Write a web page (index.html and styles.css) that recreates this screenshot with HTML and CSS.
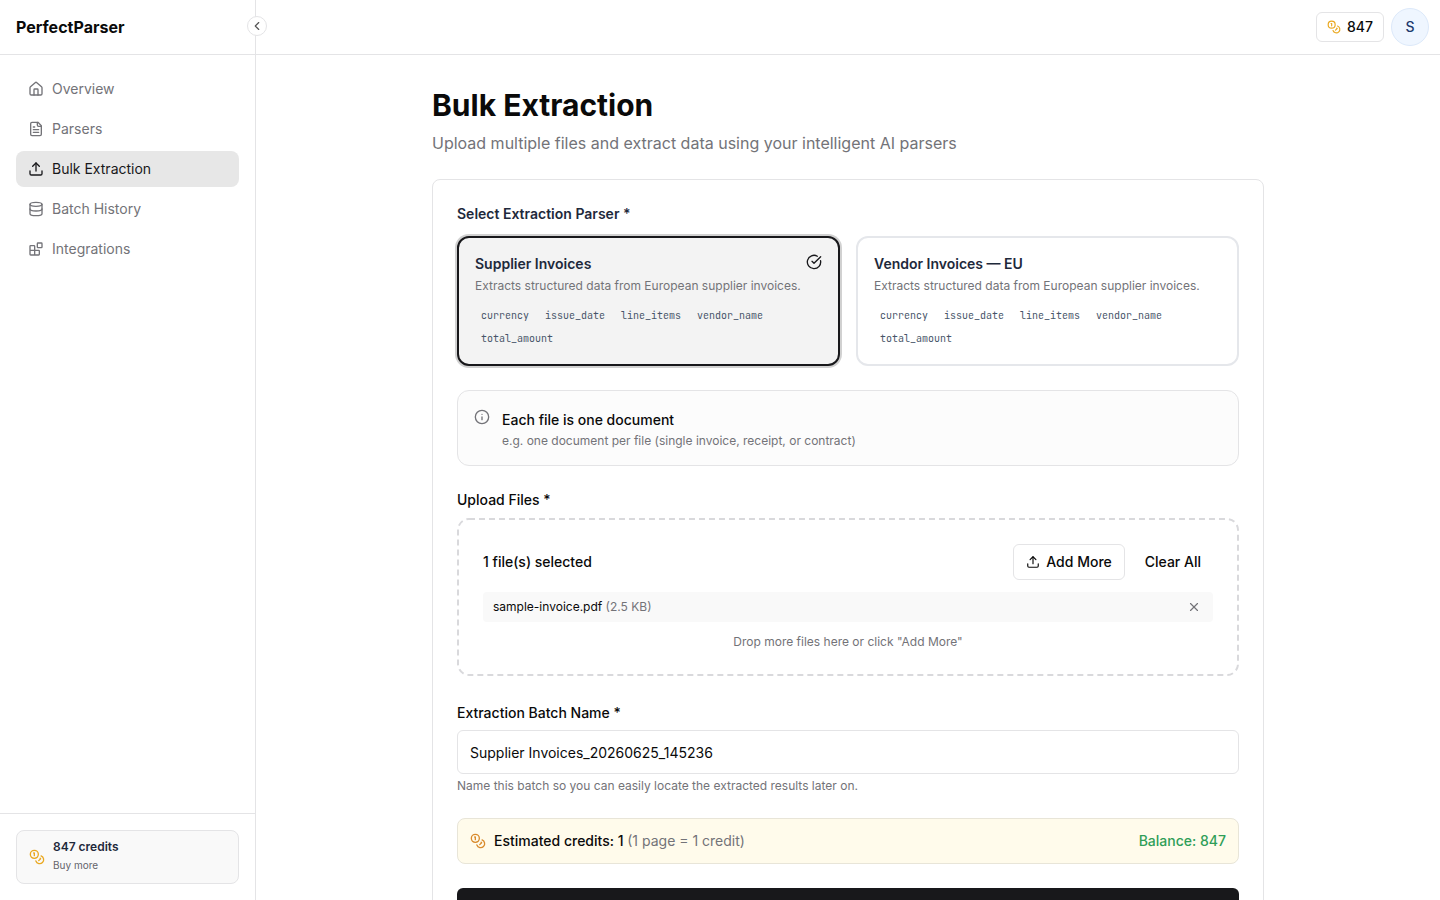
FILE: index.html
```html
<!DOCTYPE html>
<html lang="en">
<head>
<meta charset="utf-8">
<title>Bulk Extraction - PerfectParser</title>
<link rel="stylesheet" href="styles.css">
</head>
<body>
<svg class="sprite" aria-hidden="true">
  <symbol id="coins" viewBox="0 0 24 24"><circle cx="8" cy="8" r="6"/><path d="M18.09 10.37A6 6 0 1 1 10.34 18"/><path d="M7 6h1v4"/><path d="m16.71 13.88.7.71-2.82 2.82"/></symbol>
  <symbol id="upload" viewBox="0 0 24 24"><path d="M12 3v12"/><path d="m17 8-5-5-5 5"/><path d="M21 15v4a2 2 0 0 1-2 2H5a2 2 0 0 1-2-2v-4"/></symbol>
</svg>
<div class="app">
  <aside class="sidebar">
    <div class="brand">PerfectParser</div>
    <button class="collapse" aria-label="Collapse sidebar"><svg class="icon" viewBox="0 0 24 24"><path d="m15 18-6-6 6-6"/></svg></button>
    <nav class="nav">
      <a class="nav-item"><svg class="icon" viewBox="0 0 24 24"><path d="M15 21v-8a1 1 0 0 0-1-1h-4a1 1 0 0 0-1 1v8"/><path d="M3 10a2 2 0 0 1 .709-1.528l7-5.999a2 2 0 0 1 2.582 0l7 5.999A2 2 0 0 1 21 10v9a2 2 0 0 1-2 2H5a2 2 0 0 1-2-2z"/></svg>Overview</a>
      <a class="nav-item"><svg class="icon" viewBox="0 0 24 24"><path d="M15 2H6a2 2 0 0 0-2 2v16a2 2 0 0 0 2 2h12a2 2 0 0 0 2-2V7Z"/><path d="M14 2v4a2 2 0 0 0 2 2h4"/><path d="M10 9H8"/><path d="M16 13H8"/><path d="M16 17H8"/></svg>Parsers</a>
      <a class="nav-item active"><svg class="icon"><use href="#upload"/></svg>Bulk Extraction</a>
      <a class="nav-item"><svg class="icon" viewBox="0 0 24 24"><ellipse cx="12" cy="5" rx="9" ry="3"/><path d="M3 5v14a9 3 0 0 0 18 0V5"/><path d="M3 12a9 3 0 0 0 18 0"/></svg>Batch History</a>
      <a class="nav-item"><svg class="icon" viewBox="0 0 24 24"><rect width="7" height="7" x="14" y="3" rx="1"/><path d="M10 21V8a1 1 0 0 0-1-1H4a1 1 0 0 0-1 1v12a1 1 0 0 0 1 1h12a1 1 0 0 0 1-1v-5a1 1 0 0 0-1-1H3"/></svg>Integrations</a>
    </nav>
    <div class="sidebar-footer">
      <div class="credits-card">
        <svg class="icon coin"><use href="#coins"/></svg>
        <div class="credits-text"><div class="credits-count">847 credits</div><div class="credits-buy">Buy more</div></div>
      </div>
    </div>
  </aside>
  <div class="content">
    <header class="topbar">
      <div class="balance-chip"><svg class="icon coin small"><use href="#coins"/></svg>847</div>
      <div class="avatar">S</div>
    </header>
    <main class="page">
      <h1 class="title">Bulk Extraction</h1>
      <p class="subtitle">Upload multiple files and extract data using your intelligent AI parsers</p>
      <section class="panel">
        <div class="label slate">Select Extraction Parser *</div>
        <div class="parsers">
          <article class="parser selected">
            <div class="parser-name">Supplier Invoices</div>
            <p class="parser-desc">Extracts structured data from European supplier invoices.</p>
            <div class="tags"><span class="tag">currency</span><span class="tag">issue_date</span><span class="tag">line_items</span><span class="tag">vendor_name</span><span class="tag">total_amount</span></div>
            <svg class="icon check" viewBox="0 0 24 24"><path d="M21.801 10A10 10 0 1 1 17 3.335"/><path d="m9 11 3 3L22 4"/></svg>
          </article>
          <article class="parser">
            <div class="parser-name">Vendor Invoices — EU</div>
            <p class="parser-desc">Extracts structured data from European supplier invoices.</p>
            <div class="tags"><span class="tag">currency</span><span class="tag">issue_date</span><span class="tag">line_items</span><span class="tag">vendor_name</span><span class="tag">total_amount</span></div>
          </article>
        </div>
        <div class="info">
          <svg class="icon" viewBox="0 0 24 24"><circle cx="12" cy="12" r="10"/><path d="M12 16v-4"/><path d="M12 8h.01"/></svg>
          <div><div class="info-title">Each file is one document</div><div class="hint">e.g. one document per file (single invoice, receipt, or contract)</div></div>
        </div>
        <div class="label">Upload Files *</div>
        <div class="dropzone">
          <svg class="dash" width="782" height="158"><rect x="1" y="1" width="780" height="156" rx="11"/></svg>
          <div class="drop-head">
            <span class="drop-count">1 file(s) selected</span>
            <button class="btn outline"><svg class="icon small"><use href="#upload"/></svg>Add More</button>
            <button class="btn">Clear All</button>
          </div>
          <div class="file"><span>sample-invoice.pdf <span class="muted">(2.5 KB)</span></span><svg class="icon small muted" viewBox="0 0 24 24"><path d="M18 6 6 18"/><path d="m6 6 12 12"/></svg></div>
          <p class="hint center">Drop more files here or click "Add More"</p>
        </div>
        <div class="label batch-label">Extraction Batch Name *</div>
        <input class="input" value="Supplier Invoices_20260625_145236">
        <p class="hint">Name this batch so you can easily locate the extracted results later on.</p>
        <div class="estimate">
          <svg class="icon"><use href="#coins"/></svg>
          <span>Estimated credits: 1 <span class="note">(1 page = 1 credit)</span></span>
          <span class="balance">Balance: 847</span>
        </div>
        <button class="submit" aria-label="Start extraction"></button>
      </section>
    </main>
  </div>
</div>
</body>
</html>
```
FILE: styles.css
```css
* { box-sizing: border-box; }
body {
  margin: 0;
  font: 14px/20px Inter, "Liberation Sans", sans-serif;
  color: #0a0a0a;
  background: #fff;
}
h1, p { margin: 0; }
button, input { font: inherit; color: inherit; }
.sprite { display: none; }
.icon {
  display: block;
  flex: none;
  width: 16px;
  height: 16px;
  fill: none;
  stroke: currentColor;
  stroke-width: 2;
  stroke-linecap: round;
  stroke-linejoin: round;
}
.icon.small { width: 14px; height: 14px; }
.coin { color: #eaa81f; }
.muted { color: #737378; }
.app { display: flex; height: 900px; overflow: hidden; }

.sidebar {
  position: relative;
  display: flex;
  flex-direction: column;
  flex: none;
  width: 256px;
  border-right: 1px solid #e4e4e6;
}
.brand {
  height: 55px;
  padding-left: 16px;
  border-bottom: 1px solid #e4e4e6;
  font-size: 16px;
  font-weight: 700;
  line-height: 54px;
}
.collapse {
  position: absolute;
  top: 16px;
  right: -12px;
  z-index: 1;
  display: grid;
  place-items: center;
  width: 20px;
  height: 20px;
  padding: 0;
  border: 1px solid #e4e4e6;
  border-radius: 50%;
  background: #fff;
  color: #555;
}
.collapse .icon { width: 14px; height: 14px; }
.nav { display: flex; flex: 1; flex-direction: column; gap: 4px; padding: 16px; }
.nav-item {
  display: flex;
  align-items: center;
  gap: 8px;
  height: 36px;
  padding-left: 12px;
  border-radius: 8px;
  color: #737378;
}
.nav-item.active { background: #e7e7e7; color: #18181b; }
.sidebar-footer { height: 87px; padding: 16px; border-top: 1px solid #e4e4e6; }
.credits-card {
  display: flex;
  align-items: center;
  gap: 8px;
  height: 54px;
  padding-left: 12px;
  border: 1px solid #e4e4e6;
  border-radius: 8px;
  background: #f9f9f9;
}
.credits-text { padding-bottom: 4px; }
.credits-count { font-size: 12px; font-weight: 600; color: #1e293b; }
.credits-buy { font-size: 10px; line-height: 16px; color: #64646b; }

.content { flex: 1; }
.topbar {
  display: flex;
  align-items: center;
  justify-content: flex-end;
  gap: 7px;
  height: 55px;
  padding-right: 11px;
  border-bottom: 1px solid #e4e4e6;
}
.balance-chip {
  display: flex;
  align-items: center;
  gap: 6px;
  height: 30px;
  padding: 0 10px;
  border: 1px solid #e4e4e6;
  border-radius: 6px;
  font-weight: 500;
}
.avatar {
  width: 38px;
  height: 38px;
  border: 1px solid #dce9fa;
  border-radius: 50%;
  background: #eff6ff;
  color: #1e3a6e;
  font-weight: 500;
  line-height: 36px;
  text-align: center;
}
.page { width: 832px; margin: 0 auto; padding-top: 32px; }
.title { font-size: 30px; font-weight: 700; line-height: 36px; }
.subtitle { margin-top: 8px; font-size: 16px; line-height: 24px; color: #737378; }
.panel {
  height: 900px;
  margin-top: 24px;
  padding: 24px;
  border: 1px solid #e4e4e6;
  border-radius: 8px;
}
.label { margin-bottom: 8px; font-weight: 500; }
.label.slate { margin-bottom: 12px; font-weight: 600; color: #1e293b; }
.parsers { display: grid; grid-template-columns: 1fr 1fr; gap: 16px; }
.parser {
  position: relative;
  height: 130px;
  padding: 16px;
  border: 2px solid #e5e7eb;
  border-radius: 12px;
}
.parser.selected {
  border-color: #18181b;
  background: #f3f3f3;
  box-shadow: 0 0 0 2px #d1d1d1;
}
.parser-name { font-weight: 600; color: #1e293b; }
.parser-desc { margin-top: 2px; font-size: 12px; color: #737378; }
.tags { display: flex; flex-wrap: wrap; gap: 4px; margin-top: 10px; }
.tag {
  height: 19px;
  padding: 0 6px;
  font: 10px/19px "JetBrains Mono", "DejaVu Sans Mono", monospace;
  color: #475569;
}
.check { position: absolute; top: 16px; right: 16px; color: #18181b; }
.info {
  display: flex;
  gap: 12px;
  height: 76px;
  margin: 24px 0;
  padding: 18px 16px;
  border: 1px solid #e4e4e6;
  border-radius: 12px;
  background: #fcfcfc;
}
.info > .icon { color: #737378; }
.info-title { margin: 1px 0 3px; font-weight: 500; }
.hint { font-size: 12px; line-height: 16px; color: #737378; }
.dropzone { position: relative; height: 158px; padding: 26px; }
.dash { position: absolute; inset: 0; fill: none; stroke: #d9d9dc; stroke-width: 2; stroke-dasharray: 6 4; pointer-events: none; }
.drop-head { display: flex; align-items: center; }
.drop-count { flex: 1; font-weight: 500; }
.btn {
  display: flex;
  align-items: center;
  gap: 6px;
  height: 36px;
  padding: 0 12px;
  border: 0;
  background: none;
  font-weight: 500;
}
.btn.outline { margin-right: 8px; border: 1px solid #e4e4e6; border-radius: 6px; }
.file {
  display: flex;
  align-items: center;
  justify-content: space-between;
  height: 30px;
  margin: 12px 0;
  padding: 0 12px 0 10px;
  border-radius: 4px;
  background: #f9f9f9;
  font-size: 12px;
}
.center { text-align: center; }
.batch-label { margin: 27px 0 7px; }
.input {
  display: block;
  width: 100%;
  height: 44px;
  margin-bottom: 4px;
  padding: 0 12px;
  border: 1px solid #e4e4e6;
  border-radius: 6px;
  background: #fff;
}
.estimate {
  display: flex;
  align-items: center;
  gap: 8px;
  height: 46px;
  margin: 24px 0;
  padding: 0 12px;
  border: 1px solid #e8e5d8;
  border-radius: 8px;
  background: #fffbeb;
  font-weight: 500;
}
.estimate .icon { color: #d98a2b; }
.note { font-weight: 400; color: #737378; }
.balance { margin-left: auto; color: #2f9e58; }
.submit { display: block; width: 100%; height: 44px; border: 0; border-radius: 6px; background: #18181b; }
```
